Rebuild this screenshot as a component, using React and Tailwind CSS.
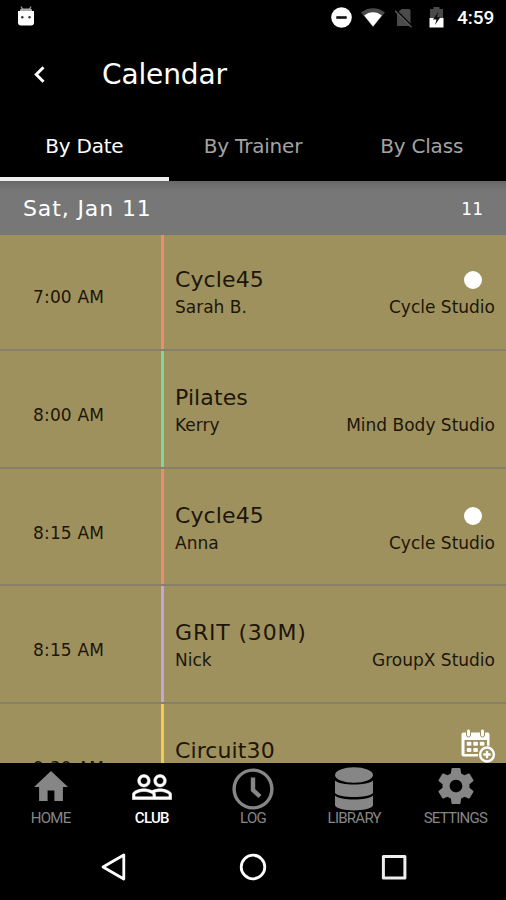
const NoDisturbIcon = () => (
  <svg className="w-[21px] h-[21px]" viewBox="0 0 21 21">
    <circle cx="10.5" cy="10.5" r="10.3" fill="#fff" />
    <rect x="5.3" y="9.2" width="10.4" height="2.6" fill="#111" />
  </svg>
);

const WifiIcon = () => (
  <svg className="w-6 h-[19px]" viewBox="0 0 24 19">
    <path d="M0 4.5C7-1.3 17-1.3 24 4.5L12 19z" fill="#4a4a4a" />
    <path d="M3.2 7.6c5-4.6 12.6-4.6 17.6 0L12 18.6z" fill="#fff" />
  </svg>
);

const NoSimIcon = () => (
  <svg className="w-[18px] h-5" viewBox="0 0 18 20">
    <path d="M6.5 1H14a1.5 1.5 0 0 1 1.5 1.5V18H2V5.5z" fill="#4a4a4a" />
    <path d="M1.2 2.2 17.6 18.6" stroke="#000" strokeWidth="1.5" />
    <path d="M0 2.8 16.5 19.3" stroke="#5a5a5a" strokeWidth="1.5" />
  </svg>
);

const BatteryIcon = () => (
  <svg className="w-[15px] h-[21px]" viewBox="0 0 15 21">
    <path d="M4.5 0h6v2H14v9H1V2h3.5z" fill="#4a4a4a" />
    <path d="M.5 11h14v9.5H.5z" fill="#fff" />
    <path d="M9.5 4.5 4 12.5h3.500L6 18l5.500-8H8z" fill="#111" />
  </svg>
);

const DebugIcon = () => (
  <svg className="w-[18px] h-5" viewBox="0 0 18 20">
    <path d="M4 .5 6 4M14 .5 12 4" stroke="#999" strokeWidth="1.3" />
    <path d="M3 5V4q0-1.500 2-1.500h8Q15 2.500 15 4v1z" fill="#aaa" />
    <path d="M1 5h16v11.500Q17 19.500 14 19.500H4q-3 0-3-3z" fill="#fff" />
    <circle cx="5.3" cy="11.3" r="1.2" fill="#333" />
    <circle cx="12.5" cy="11.3" r="1.2" fill="#333" />
  </svg>
);

const BackIcon = () => (
  <svg className="w-[11px] h-[17px]" viewBox="0 0 11 17" fill="none" stroke="#fff" strokeWidth="3">
    <path d="M9.5 1.3 2.3 8.5l7.2 7.2" />
  </svg>
);

const HomeIcon = () => (
  <svg className="w-[34px] h-[30px] mt-2" viewBox="2 3 20 17" preserveAspectRatio="none" fill="currentColor">
    <path d="M10 20v-6h4v6h5v-8h3L12 3 2 12h3v8z" />
  </svg>
);

const ClubIcon = () => (
  <svg className="w-10 h-[26px] mt-[11px]" viewBox="0.8 4.8 22.4 14.4" fill="currentColor" stroke="currentColor" strokeWidth="0.3">
    <path d="M16.5 13c-1.2 0-3.07.34-4.5 1-1.43-.67-3.3-1-4.5-1C5.33 13 1 14.08 1 16.25V19h22v-2.75c0-2.17-4.33-3.25-6.5-3.25zm-4 4.5h-10v-1.25c0-.54 2.56-1.75 5-1.75s5 1.21 5 1.75v1.25zm9 0H14v-1.25c0-.46-.2-.86-.52-1.22.88-.3 1.96-.53 3.02-.53 2.44 0 5 1.21 5 1.75v1.25zM7.5 12c1.93 0 3.5-1.57 3.5-3.5S9.43 5 7.5 5 4 6.57 4 8.5 5.57 12 7.5 12zm0-5.5c1.1 0 2 .9 2 2s-.9 2-2 2-2-.9-2-2 .9-2 2-2zm9 5.5c1.93 0 3.5-1.57 3.5-3.5S18.43 5 16.5 5 13 6.57 13 8.5s1.57 3.5 3.5 3.5zm0-5.5c1.1 0 2 .9 2 2s-.9 2-2 2-2-.9-2-2 .9-2 2-2z" />
  </svg>
);

const LogIcon = () => (
  <svg className="w-[42px] h-[42px] mt-[5px]" viewBox="0 0 42 42" fill="none" stroke="currentColor">
    <circle cx="21" cy="21" r="18.9" strokeWidth="3.4" />
    <path d="M21 9.5V22l7 6.5" strokeWidth="4.4" />
  </svg>
);

const LibraryIcon = () => (
  <svg className="w-[38px] h-[44px] mt-1" viewBox="0 0 38 44" fill="currentColor">
    <ellipse cx="19" cy="8" rx="19" ry="7.8" />
    <path d="M0 13.5c5 5.300 33 5.300 38 0V26c-4 5.300-34 5.300-38 0z" />
    <path d="M0 28.5c5 5.300 33 5.300 38 0v10c-4 6.500-34 6.500-38 0z" />
  </svg>
);

const SettingsIcon = () => (
  <svg className="w-[36px] h-[36px] mt-[5px] ml-0.5" viewBox="2 2 20 20" fill="currentColor">
    <path d="M19.43 12.98c.04-.32.07-.64.07-.98s-.03-.66-.07-.98l2.11-1.65c.19-.15.24-.42.12-.64l-2-3.46c-.12-.22-.39-.3-.61-.22l-2.49 1c-.52-.4-1.08-.73-1.69-.98l-.38-2.65C14.46 2.18 14.25 2 14 2h-4c-.25 0-.46.18-.49.42l-.38 2.65c-.61.25-1.17.59-1.69.98l-2.49-1c-.23-.09-.49 0-.61.22l-2 3.46c-.13.22-.07.49.12.64l2.11 1.65c-.04.32-.07.65-.07.98s.03.66.07.98l-2.11 1.65c-.19.15-.24.42-.12.64l2 3.46c.12.22.39.3.61.22l2.49-1c.52.4 1.08.73 1.69.98l.38 2.65c.03.24.24.42.49.42h4c.25 0 .46-.18.49-.42l.38-2.65c.61-.25 1.17-.59 1.69-.98l2.49 1c.23.09.49 0 .61-.22l2-3.46c.12-.22.07-.49-.12-.64l-2.11-1.65zM12 15.5c-1.93 0-3.5-1.57-3.5-3.5s1.57-3.5 3.5-3.5 3.5 1.57 3.5 3.5-1.57 3.5-3.5 3.5z" />
  </svg>
);

const CalendarAddIcon = () => (
  <svg className="w-[35px] h-[34px]" viewBox="0 0 35 34">
    <path d="M2.5 3.5h24q2 0 2 2V17H26v-6H3.5v14H17v2.500H2.500q-2 0-2-2v-20q0-2 2-2z" fill="#fff" />
    <g fill="#fff" stroke="#9f915d" strokeWidth="1">
      <rect x="5.5" y="0" width="4" height="8" rx="2" />
      <rect x="19.5" y="0" width="4" height="8" rx="2" />
    </g>
    <g fill="#fff">
      <rect x="5.8" y="12.8" width="4.6" height="4" rx="1" />
      <rect x="12.3" y="12.8" width="4.6" height="4" rx="1" />
      <rect x="18.8" y="12.8" width="4.6" height="4" rx="1" />
      <rect x="5.8" y="19" width="4.6" height="4" rx="1" />
      <rect x="12.3" y="19" width="4.6" height="4" rx="1" />
    </g>
    <circle cx="26" cy="25.500" r="9" fill="#9f915d" />
    <circle cx="26" cy="25.500" r="6.900" fill="none" stroke="#fff" strokeWidth="2.500" />
    <path d="M22.300 25.500h7.400M26 21.800v7.400" stroke="#fff" strokeWidth="2.400" />
  </svg>
);

const classes = [
  { time: '7:00 AM', name: 'Cycle45', trainer: 'Sarah B.', studio: 'Cycle Studio', bar: 'bg-[#ef8b6f]', dot: true },
  { time: '8:00 AM', name: 'Pilates', trainer: 'Kerry', studio: 'Mind Body Studio', bar: 'bg-[#7fd6a0]' },
  { time: '8:15 AM', name: 'Cycle45', trainer: 'Anna', studio: 'Cycle Studio', bar: 'bg-[#ef8b6f]', dot: true },
  { time: '8:15 AM', name: 'GRIT (30M)', trainer: 'Nick', studio: 'GroupX Studio', bar: 'bg-[#c9a4dc]', nameClass: 'tracking-[0.038em]' },
  { time: '9:30 AM', name: 'Circuit30', bar: 'bg-[#f2cb4c]' },
];

const navItems = [
  { label: 'HOME', Icon: HomeIcon },
  { label: 'CLUB', Icon: ClubIcon, active: true },
  { label: 'LOG', Icon: LogIcon },
  { label: 'LIBRARY', Icon: LibraryIcon },
  { label: 'SETTINGS', Icon: SettingsIcon },
];

const ClassRow = ({ item }) => (
  <div className="flex h-[117.8px] shrink-0 border-b-2 border-[#898069]">
    <div className="w-[161px] pl-[33px] pt-[53px] text-[17px] leading-[22px] tracking-[0.01em]">{item.time}</div>
    <div className={`w-[3px] ${item.bar}`} />
    <div className="flex-1 pl-[11px] pr-[11px] pt-8">
      <div className="flex items-center justify-between h-[30px]">
        <span className={`text-[22px] leading-[30px] ${item.nameClass || 'tracking-[0.005em]'}`}>{item.name}</span>
        {item.dot && <span className="w-[18px] h-[18px] mr-[13px] rounded-full bg-white" />}
      </div>
      <div className="flex justify-between text-[17px] leading-[25px]">
        <span>{item.trainer}</span>
        <span>{item.studio}</span>
      </div>
    </div>
  </div>
);

const App = () => {
  return (
    <div className="w-[506px] h-[900px] flex flex-col overflow-hidden bg-black font-['DejaVu_Sans',Verdana,sans-serif]">
      {/* Status bar */}
      <div className="h-[35px] shrink-0 flex items-center justify-between pl-[17px] pr-[10px]">
        <div className="mb-1"><DebugIcon /></div>
        <div className="flex items-center">
          <NoDisturbIcon />
          <div className="ml-[9px]"><WifiIcon /></div>
          <div className="ml-[10px]"><NoSimIcon /></div>
          <div className="ml-[16px]"><BatteryIcon /></div>
          <span className="ml-[13px] w-[39px] font-['Roboto',sans-serif] font-medium text-[19px] leading-none text-white">4:59</span>
        </div>
      </div>

      {/* Title */}
      <div className="h-[78px] shrink-0 flex items-center pl-[34px] text-white">
        <BackIcon />
        <h1 className="ml-[57px] mt-0.5 text-[28px] leading-none tracking-[-0.005em]">Calendar</h1>
      </div>

      {/* Tabs */}
      <div className="h-[68px] shrink-0 grid grid-cols-3 text-center text-[20px] leading-[64px] tracking-[-0.01em] text-[#a3a3a3]">
        <div className="h-[68px] border-b-4 border-[#eee] text-white pt-px">By Date</div>
        <div className="pt-px">By Trainer</div>
        <div className="pt-px">By Class</div>
      </div>

      {/* Date header */}
      <div className="relative z-10 h-[54px] shrink-0 flex items-center justify-between pl-[23px] pr-[23px] pt-0.5 bg-linear-to-b from-[#686868] to-[#777] to-20% text-white">
        <span className="text-[22px] leading-none tracking-[0.04em]">Sat, Jan 11</span>
        <span className="text-[17px] leading-none">11</span>
      </div>

      {/* Class list */}
      <div className="relative h-[530px] -mt-0.5 shrink-0 overflow-hidden bg-[#9f915d] text-[#1c160a]">
        {classes.map((item, i) => (
          <ClassRow key={i} item={item} />
        ))}
        <button className="absolute right-[10px] bottom-0" aria-label="Add to calendar">
          <CalendarAddIcon />
        </button>
      </div>

      {/* Bottom navigation */}
      <nav className="h-[70px] shrink-0 grid grid-cols-5 font-['Roboto',sans-serif] text-[15px] tracking-[-0.05em]">
        {navItems.map(({ label, Icon, active }) => (
          <div key={label} className={active ? 'flex flex-col items-center text-white font-medium' : 'flex flex-col items-center text-[#868686]'}>
            <div className="h-[47px]"><Icon /></div>
            <span className="leading-[16px]">{label}</span>
          </div>
        ))}
      </nav>

      {/* System buttons */}
      <div className="flex-1 flex items-start justify-between pl-[100px] pr-[98px] pt-[19px]">
        <svg className="w-[28px] h-[30px]" viewBox="0 0 28 30" fill="none" stroke="#fff" strokeWidth="2.8" strokeLinejoin="round">
          <path d="M23.8 3v24L3 15z" />
        </svg>
        <svg className="w-[30px] h-[30px] mr-0.5" viewBox="0 0 30 30" fill="none" stroke="#fff" strokeWidth="2.8">
          <circle cx="15" cy="15" r="11.8" />
        </svg>
        <svg className="w-[28px] h-[30px]" viewBox="0 0 28 30" fill="none" stroke="#eee" strokeWidth="3" strokeLinejoin="round">
          <rect x="3.4" y="4.4" width="21.5" height="21.5" />
        </svg>
      </div>
    </div>
  );
};

export default App;
